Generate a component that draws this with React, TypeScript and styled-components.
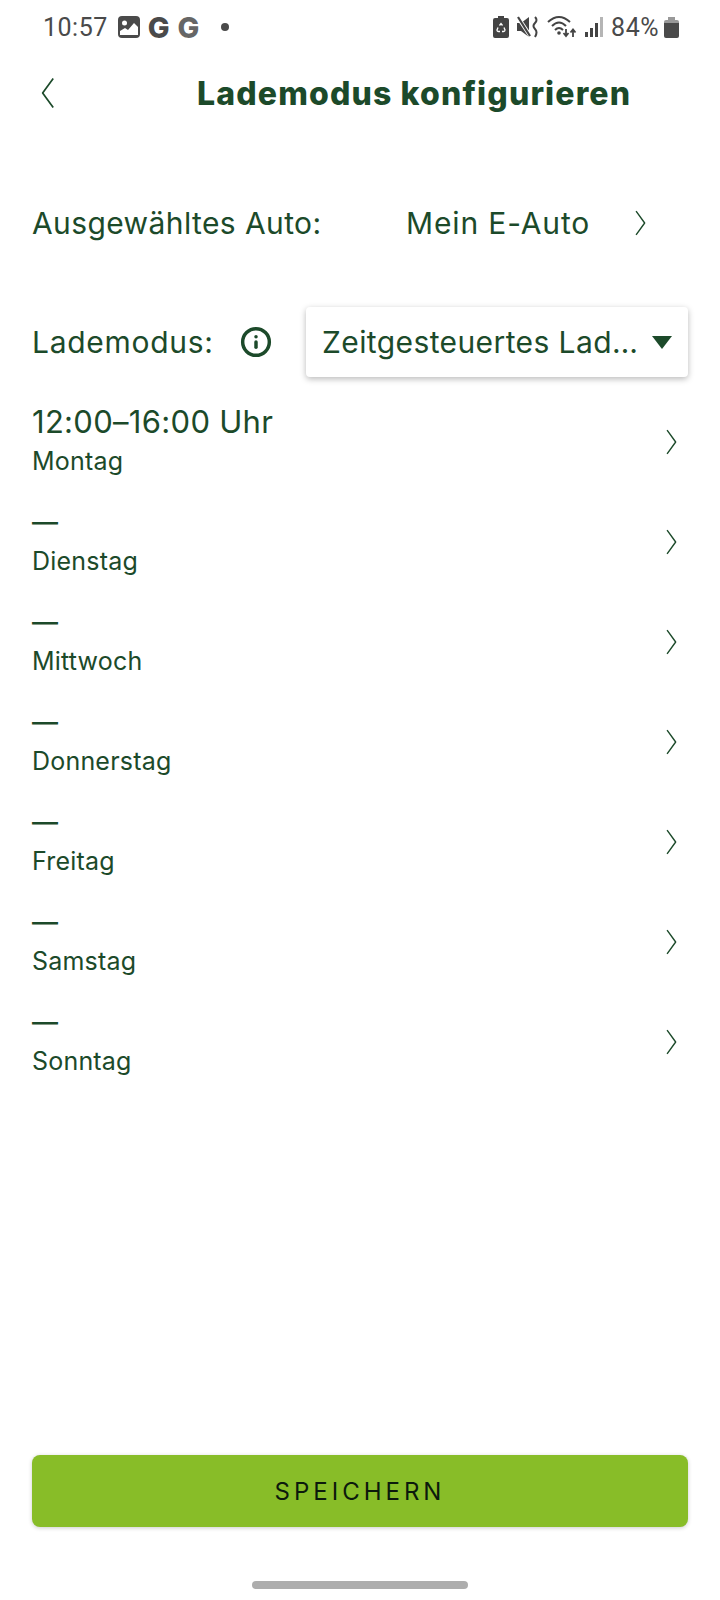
import React from 'react';
import styled, { createGlobalStyle } from 'styled-components';
import { Info } from 'lucide-react';

const green = '#1c4a2a';
const sansFont = '"Inter", "Noto Sans", sans-serif';

const GlobalStyle = createGlobalStyle`
  html, body { margin: 0; padding: 0; background: #fff; }
  body { font-family: ${sansFont}; color: ${green}; }
`;

const Page = styled.div`
  width: 720px;
  height: 1600px;
  display: flex;
  flex-direction: column;
  background: #fff;
`;

const StatusBar = styled.div`
  height: 54px;
  padding: 0 41px 0 43px;
  display: flex;
  align-items: center;
  justify-content: space-between;
  box-sizing: border-box;
  color: #4a4a4a;
`;

const StatusGroup = styled.div<{ $gap?: number }>`
  display: flex;
  align-items: center;
  gap: ${(p) => p.$gap ?? 6}px;
`;

const StatusText = styled.span`
  font-family: "Roboto", sans-serif;
  font-size: 25px;
  letter-spacing: 0.5px;
`;

const BatteryText = styled(StatusText)`
  margin-right: -3px;
`;

const GoogleG = styled.span<{ $light?: boolean }>`
  font-family: ${sansFont};
  font-weight: 800;
  font-size: 29px;
  line-height: 1;
  color: ${(p) => (p.$light ? '#666' : '#4a4a4a')};
`;

const Dot = styled.span`
  width: 8px;
  height: 8px;
  margin-left: 14px;
  border-radius: 50%;
  background: #4a4a4a;
`;

const Header = styled.div`
  height: 78px;
  padding: 0 32px 0 40px;
  display: flex;
  align-items: center;
`;

const BackSlot = styled.div`
  width: 157px;
  display: flex;
`;

const Title = styled.h1`
  margin: 0;
  font-size: 32px;
  font-weight: 800;
  letter-spacing: 1.15px;
  color: ${green};
  white-space: nowrap;
`;

const AutoRow = styled.div`
  margin-top: 60px;
  height: 62px;
  padding: 0 32px;
  display: flex;
  align-items: center;
  font-size: 30px;
  letter-spacing: 0.4px;
`;

const AutoLabel = styled.span`
  width: 374px;
`;

const AutoValue = styled.span`
  width: 229px;
  letter-spacing: 0.85px;
`;

const ModeRow = styled.div`
  margin-top: 53px;
  padding: 0 32px;
  display: flex;
  align-items: center;
  font-size: 30px;
  letter-spacing: 0.4px;
`;

const ModeLabel = styled.span`
  width: 208px;
  letter-spacing: 0.7px;
`;

const InfoSlot = styled.div`
  width: 66px;
  display: flex;
  color: ${green};
`;

const Dropdown = styled.div`
  width: 382px;
  height: 70px;
  padding: 0 16px;
  box-sizing: border-box;
  display: flex;
  align-items: center;
  justify-content: space-between;
  border-radius: 4px;
  background: #fff;
  box-shadow: 0 2px 6px rgba(0, 0, 0, 0.28);
`;

const Caret = styled.span`
  width: 0;
  height: 0;
  border-left: 10px solid transparent;
  border-right: 10px solid transparent;
  border-top: 13px solid ${green};
`;

const DayList = styled.div`
  margin-top: 13px;
  display: flex;
  flex-direction: column;
`;

const DayRow = styled.div`
  height: 100px;
  padding: 0 42px 0 32px;
  box-sizing: border-box;
  display: flex;
  align-items: center;
  justify-content: space-between;
`;

const DayText = styled.div`
  display: flex;
  flex-direction: column;
`;

const DayTime = styled.span<{ $dash?: boolean }>`
  font-size: ${(p) => (p.$dash ? 26 : 31)}px;
  font-weight: ${(p) => (p.$dash ? 500 : 400)};
  letter-spacing: 0.3px;
  line-height: 42px;
`;

const DayName = styled.span`
  font-size: 25px;
  letter-spacing: 0.2px;
  line-height: 36px;
`;

const ChevronSlot = styled.div`
  display: flex;
  margin-top: 3px;
`;

const Spacer = styled.div`
  flex: 1;
`;

const SaveButton = styled.button`
  margin: 0 32px;
  height: 72px;
  border: 0;
  border-radius: 8px;
  background: #88bd28;
  color: #0c1a0c;
  font-family: ${sansFont};
  font-size: 24px;
  letter-spacing: 4px;
  box-shadow: 0 1px 4px rgba(0, 0, 0, 0.2);
`;

const HomeBar = styled.div`
  width: 216px;
  height: 8px;
  margin: 54px auto 11px;
  border-radius: 4px;
  background: #adadad;
`;

const Chevron = ({ left = false, height = 26 }: { left?: boolean; height?: number }) => (
  <svg width={height / 2.2} height={height} viewBox="0 0 11 24" fill="none">
    <path
      d={left ? 'M10 1 L2 12 L10 23' : 'M1 1 L9 12 L1 23'}
      stroke={green}
      strokeWidth="1.3"
      strokeLinejoin="round"
    />
  </svg>
);

const PictureIcon = () => (
  <svg width="22" height="22" viewBox="0 0 22 22">
    <rect x="0" y="0" width="22" height="22" rx="4" fill="#4a4a4a" />
    <circle cx="6.5" cy="7" r="2.5" fill="#fff" />
    <path d="M2 19 L2 15 L7 12 L10 14 L16 7 L20 11 L20 19 Z" fill="#fff" />
  </svg>
);

const SaverIcon = () => (
  <svg width="16" height="22" viewBox="0 0 16 22">
    <path d="M5 0 H11 V2 H14 Q16 2 16 4 V20 Q16 22 14 22 H2 Q0 22 0 20 V4 Q0 2 2 2 H5 Z" fill="#444" />
    <path d="M6.500 9.500 L8 7.500 L9.500 9.500 M11 11.500 L12 14 Q12 15.500 10.500 15.500 H9 M7 15.500 H5.500 Q4 15.500 4 14 L5 11.500" stroke="#fff" strokeWidth="1.3" fill="none" />
  </svg>
);

const MuteIcon = () => (
  <svg width="22" height="22" viewBox="0 0 22 22">
    <path d="M0 7 H4 L12 1 V21 L4 15 H0 Z" fill="#444" />
    <path d="M0 0 L14 21" stroke="#fff" strokeWidth="4" />
    <path d="M1 1 L13 20" stroke="#444" strokeWidth="2.2" />
    <path d="M18 1 Q21 4 18 7 Q15 10 18 13 Q21 16 18 21" stroke="#444" strokeWidth="2" fill="none" />
  </svg>
);

const WifiIcon = () => (
  <svg width="30" height="24" viewBox="0 0 30 24">
    <g fill="none" stroke="#444" strokeWidth="2">
      <path d="M1 7 Q12 -3 23 7" />
      <path d="M5 11 Q12 4 19 11" />
      <path d="M8 15 Q12 11 16 15" />
    </g>
    <circle cx="12" cy="18" r="1.8" fill="#444" />
    <path d="M19 14 V20 M16.5 18 L19 21 L21.500 18" stroke="#444" strokeWidth="1.8" fill="none" />
    <path d="M26 22 V15 M23.500 17.500 L26 14.500 L28.500 17.500" stroke="#444" strokeWidth="1.800" fill="none" />
  </svg>
);

const SignalIcon = () => (
  <svg width="18" height="20" viewBox="0 0 18 20">
    <rect x="0" y="15" width="3" height="5" fill="#444" />
    <rect x="5" y="11" width="3" height="9" fill="#444" />
    <rect x="10" y="6" width="3" height="14" fill="#444" />
    <rect x="15" y="0" width="3" height="20" fill="#b5b5b5" />
  </svg>
);

const BatteryIcon = () => (
  <svg width="15" height="21" viewBox="0 0 15 21">
    <path d="M4 0 H11 V3 H13 Q15 3 15 5 V6 H0 V5 Q0 3 2 3 H4 Z" fill="#999" />
    <path d="M0 6 H15 V19 Q15 21 13 21 H2 Q0 21 0 19 Z" fill="#4a4a4a" />
  </svg>
);

const days = [
  { name: 'Montag', time: '12:00–16:00 Uhr' },
  { name: 'Dienstag', time: '—' },
  { name: 'Mittwoch', time: '—' },
  { name: 'Donnerstag', time: '—' },
  { name: 'Freitag', time: '—' },
  { name: 'Samstag', time: '—' },
  { name: 'Sonntag', time: '—' },
];

export default function App() {
  return (
    <Page>
      <GlobalStyle />
      <StatusBar>
        <StatusGroup $gap={10}>
          <StatusText>10:57</StatusText>
          <StatusGroup $gap={8}>
            <PictureIcon />
            <GoogleG>G</GoogleG>
            <GoogleG $light>G</GoogleG>
            <Dot />
          </StatusGroup>
        </StatusGroup>
        <StatusGroup $gap={8}>
          <SaverIcon />
          <MuteIcon />
          <WifiIcon />
          <SignalIcon />
          <BatteryText>84%</BatteryText>
          <BatteryIcon />
        </StatusGroup>
      </StatusBar>
      <Header>
        <BackSlot>
          <Chevron left height={32} />
        </BackSlot>
        <Title>Lademodus konfigurieren</Title>
      </Header>
      <AutoRow>
        <AutoLabel>Ausgewähltes Auto:</AutoLabel>
        <AutoValue>Mein E-Auto</AutoValue>
        <Chevron />
      </AutoRow>
      <ModeRow>
        <ModeLabel>Lademodus:</ModeLabel>
        <InfoSlot>
          <Info size={32} strokeWidth={2.6} />
        </InfoSlot>
        <Dropdown>
          <span>Zeitgesteuertes Lad…</span>
          <Caret />
        </Dropdown>
      </ModeRow>
      <DayList>
        {days.map((day) => (
          <DayRow key={day.name}>
            <DayText>
              <DayTime $dash={day.time === '—'}>{day.time}</DayTime>
              <DayName>{day.name}</DayName>
            </DayText>
            <ChevronSlot>
              <Chevron />
            </ChevronSlot>
          </DayRow>
        ))}
      </DayList>
      <Spacer />
      <SaveButton>SPEICHERN</SaveButton>
      <HomeBar />
    </Page>
  );
}
